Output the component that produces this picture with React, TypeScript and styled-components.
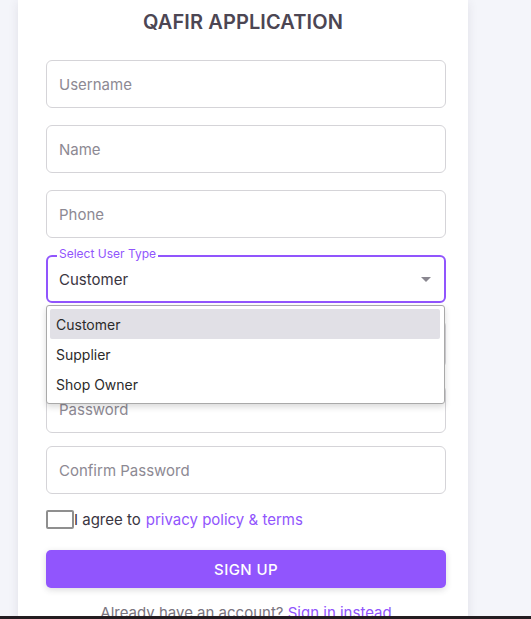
import React, { useState } from 'react'
import styled, { createGlobalStyle } from 'styled-components'

// sign up card for the qafir app, with the user type dropdown open

const GlobalStyle = createGlobalStyle`
  html, body {
    margin: 0;
    padding: 0;
    height: 100%;
    overflow: hidden;
  }
  body {
    font-family: Inter, "Noto Sans", "Liberation Sans", sans-serif;
    background: #f4f5fa;
  }
  #root {
    height: 100%;
  }
`;

const Screen = styled.div`
  height: 100%;
  display: flex;
  flex-direction: column;
`;

const Viewport = styled.div`
  flex: 1;
  overflow: hidden;
  background: #f4f5fa;
  padding-left: 18px;
`;

const BottomEdge = styled.div`
  height: 3px;
  background: #231c20;
`;

const Card = styled.div`
  width: 450px;
  min-height: 100%;
  box-sizing: border-box;
  background: #ffffff;
  box-shadow: 0 2px 10px rgba(58, 53, 65, 0.1);
  padding: 6px 22px 0 28px;
  display: flex;
  flex-direction: column;
`;

const Title = styled.h1`
  margin: 0 -22px 22px -28px;
  font-size: 20px;
  line-height: 32px;
  font-weight: 600;
  text-align: center;
  color: #4c4653;
  letter-spacing: 0.1px;
`;

const Field = styled.input<{ $gap?: number }>`
  display: block;
  box-sizing: border-box;
  width: 400px;
  height: 48px;
  margin: 0 0 ${p => p.$gap ?? 17}px;
  padding: 0 12px;
  border: 1px solid #d5d4d8;
  border-radius: 6px;
  font-family: inherit;
  font-size: 15px;
  color: #3a3541;
  outline: none;
  &::placeholder {
    color: #8d8993;
  }
`;

const SelectWrap = styled.div`
  position: relative;
  width: 400px;
  margin-bottom: 17px;
`;

const SelectBox = styled.div`
  box-sizing: border-box;
  height: 48px;
  border: 2px solid #9155fd;
  border-radius: 6px;
  display: flex;
  align-items: center;
  justify-content: space-between;
  padding: 0 13px 0 11px;
  font-size: 15px;
  color: #3a3541;
`;

const FloatLabel = styled.span`
  position: absolute;
  top: -8px;
  left: 11px;
  padding: 0 2px;
  background: #ffffff;
  font-size: 12px;
  line-height: 14px;
  color: #9155fd;
`;

const Caret = styled.span`
  width: 0;
  height: 0;
  border-left: 5px solid transparent;
  border-right: 5px solid transparent;
  border-top: 5px solid #8a8790;
  margin-top: 1px;
`;

const Menu = styled.ul`
  position: absolute;
  top: 50px;
  left: 0;
  width: 399px;
  box-sizing: border-box;
  margin: 0;
  padding: 3px 4px 4px 3px;
  list-style: none;
  background: #ffffff;
  border: 1px solid #a9a9a9;
  border-radius: 3px;
  box-shadow: 0 3px 6px rgba(0, 0, 0, 0.15);
  z-index: 2;
`;

const MenuItem = styled.li<{ $active?: boolean }>`
  height: 30px;
  display: flex;
  align-items: center;
  padding-left: 6px;
  font-size: 14px;
  color: #2b2b2b;
  background: ${p => (p.$active ? '#e1e0e6' : 'transparent')};
  border-radius: 2px;
`;

const AgreeRow = styled.label`
  display: flex;
  align-items: center;
  margin: 0 0 21px;
  font-size: 15px;
  color: #3a3541;
  height: 20px;
`;

const Box = styled.span`
  width: 28px;
  height: 19px;
  box-sizing: border-box;
  border: 2px solid #8f8f8f;
  border-radius: 2px;
`;

const Link = styled.a<{ $lead?: boolean }>`
  color: #9155fd;
  text-decoration: none;
  margin-left: ${p => (p.$lead ? 5 : 0)}px;
`;

const SubmitButton = styled.button`
  width: 400px;
  height: 38px;
  border: none;
  border-radius: 5px;
  background: #9155fd;
  color: #ffffff;
  font-family: inherit;
  font-size: 15px;
  font-weight: 500;
  letter-spacing: 0.4px;
  box-shadow: 0 2px 6px rgba(58, 53, 65, 0.18);
  cursor: pointer;
`;

const Footer = styled.p`
  margin: 15px 0 0;
  text-align: center;
  font-size: 15px;
  line-height: 20px;
  color: #7a7580;
  width: 400px;
`;

const options = ['Customer', 'Supplier', 'Shop Owner'];

const App: React.FC = () => {
  const [userType, setUserType] = useState('Customer');

  return (
    <Screen>
      <GlobalStyle />
      <Viewport>
        <Card>
          <Title>QAFIR APPLICATION</Title>
          <Field placeholder="Username" />
          <Field placeholder="Name" />
          <Field placeholder="Phone" />
          <SelectWrap>
            <FloatLabel>Select User Type</FloatLabel>
            <SelectBox>
              {userType}
              <Caret />
            </SelectBox>
            <Menu>
              {options.map(o => (
                <MenuItem key={o} $active={o === userType} onClick={() => setUserType(o)}>
                  {o}
                </MenuItem>
              ))}
            </Menu>
          </SelectWrap>
          <Field placeholder="Email" />
          <Field placeholder="Password" type="password" $gap={13} />
          <Field placeholder="Confirm Password" type="password" $gap={15} />
          <AgreeRow>
            <Box />
            I agree to<Link $lead href="#">privacy policy &amp; terms</Link>
          </AgreeRow>
          <SubmitButton>SIGN UP</SubmitButton>
          <Footer>
            Already have an account? <Link href="#">Sign in instead</Link>
          </Footer>
        </Card>
      </Viewport>
      <BottomEdge />
    </Screen>
  )
}

export default App
